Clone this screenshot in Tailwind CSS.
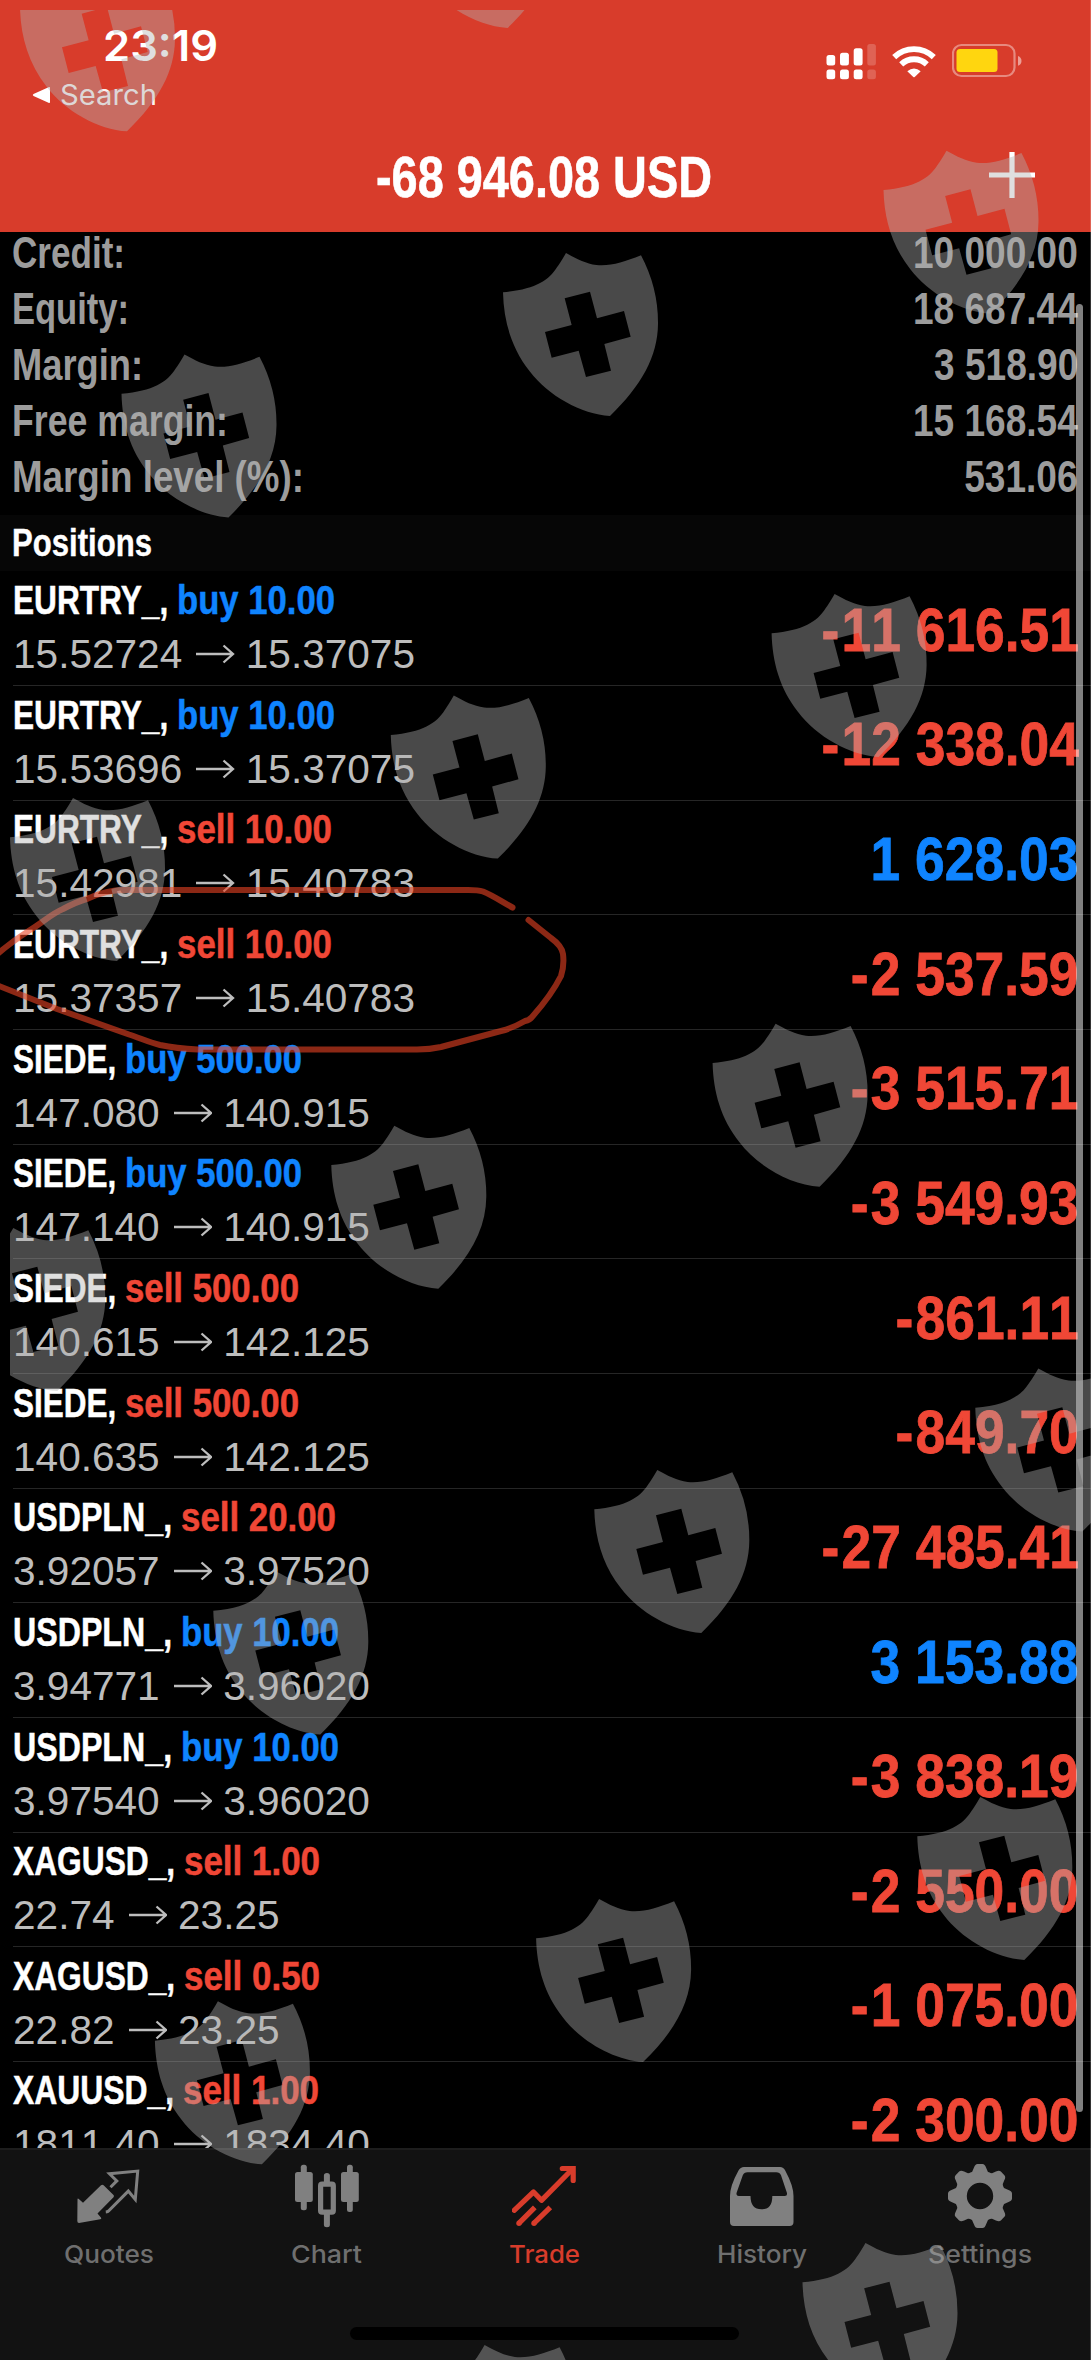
<!DOCTYPE html>
<html lang="en">
<head>
    <meta charset="UTF-8">
    <meta name="viewport" content="width=device-width, initial-scale=1.0">
    <title>Trade</title>
    <script src="https://cdn.jsdelivr.net/npm/@tailwindcss/browser@4"></script>
</head>
<body class="bg-black">
<div class="relative flex flex-col w-[1091px] h-[2360px] overflow-hidden bg-black font-['Liberation_Sans',Arial,sans-serif]">

    <!-- Header -->
    <header class="h-[232px] shrink-0 bg-[#d83c2b] text-white">
        <div class="flex justify-between h-[112px]">
            <div class="pt-[25px] pl-[32px] font-['Inter',sans-serif]">
                <div class="pl-[71px] h-[40px] leading-[40px] text-[43px] font-semibold"><span class="fit" data-font="600 43px Inter" data-w="115">23:19</span></div>
                <div class="flex items-center mt-[13px] h-[34px]">
                    <svg class="w-[19px] h-[18px]" viewBox="0 0 19 18"><path d="M18 2v14q0 1.500-1.500.8L1.500 10q-1.500-1 0-2L16.500 1.200Q18 .5 18 2z" fill="#fff"/></svg>
                    <span class="fit ml-[9px] leading-[34px] text-[28px] text-white/95" data-font="400 28px Inter" data-w="97">Search</span>
                </div>
            </div>
            <div class="flex items-start pt-[43px] pr-[68px]">
                <svg class="w-[50px] h-[38px]" viewBox="826 43 50 38" fill="#fff">
                    <rect x="826.500" y="55" width="8.700" height="10.500" rx="2.500"/><rect x="840" y="52.700" width="8.900" height="12.800" rx="2.500"/><rect x="853.700" y="48.300" width="8.900" height="17.200" rx="2.500"/><rect x="867.300" y="44" width="8.600" height="21.500" rx="2.500" fill-opacity=".2"/>
                    <rect x="826.500" y="69.600" width="8.700" height="9.700" rx="2.500"/><rect x="840" y="69.600" width="8.900" height="9.700" rx="2.500"/><rect x="853.700" y="69.600" width="8.900" height="9.700" rx="2.500"/><rect x="867.300" y="69.600" width="8.600" height="9.700" rx="2.500" fill-opacity=".2"/>
                </svg>
                <svg class="ml-[16px] w-[44px] h-[36px]" viewBox="0 0 44 36">
                    <g fill="none" stroke="#fff" stroke-width="5.800">
                        <path d="M2.200 14.200a28.500 28.500 0 0 1 39.600 0"/>
                        <path d="M9.200 21.400a18.500 18.500 0 0 1 25.600 0"/>
                    </g>
                    <path d="M15.300 28.200q6.700-5.400 13.400 0L22.700 34q-.7.600-1.400 0z" fill="#fff"/>
                </svg>
                <svg class="ml-[16px] w-[71px] h-[36px]" viewBox="952 44 71 36">
                    <rect x="953" y="46" width="61.500" height="31" rx="8.500" fill="none" stroke="#fff" stroke-opacity=".4" stroke-width="2.200"/>
                    <rect x="956.500" y="50" width="41" height="23" rx="3.500" fill="#ffd60f"/>
                    <path d="M1018 57q3.500 1.500 3.500 4.900t-3.500 4.900z" fill="#fff" fill-opacity=".5"/>
                </svg>
            </div>
        </div>
        <div class="grid grid-cols-[1fr_auto_1fr] pt-[35px]">
            <div></div>
            <div class="w-[339px] whitespace-nowrap"><span class="fit text-[57px] leading-[60px] font-bold [-webkit-text-stroke:0.6px_currentColor]" data-font="bold 57px Liberation Sans" data-w="336">-68 946.08 USD</span></div>
            <svg class="justify-self-end mt-[5px] mr-[56px] w-[46px] h-[46px]" viewBox="0 0 46 46"><path d="M23 0v46M0 23h46" stroke="#fff" stroke-width="5.200"/></svg>
        </div>
    </header>

    <!-- Account and positions -->
    <main class="flex-1 min-h-0 overflow-hidden">
        <div id="account" class="-mt-[7px] pb-[9.6px] text-[44px] font-bold leading-[56.1px] text-[#9c9c9c]"></div>
        <div class="h-[55.5px] pl-[12px] bg-[#060606] text-white text-[38.5px] leading-[55.5px] font-bold [-webkit-text-stroke:0.4px_currentColor]"><span class="fit" data-font="bold 38.5px Liberation Sans" data-w="140">Positions</span></div>
        <div id="positions"></div>
    </main>

    <!-- Tab bar -->
    <nav class="h-[212px] shrink-0 pr-[2px] bg-[#121212] border-t-2 border-[#1d1d1d] font-['Inter',sans-serif] text-[24.8px] font-medium text-[#6f6f6f]">
        <div class="grid grid-cols-5 pt-[13.500px]">
            <a class="flex flex-col items-center">
                <svg class="w-[64px] h-[64px]" viewBox="0 0 64 64">
                    <path d="M.5 35.500q0-1.500 1.300-.5L6 38.700 24 21.200q1.300-1 2.600 0L36.500 31q1 1 0 2.200L20.500 49.500l3.600 4.200q.7 1.300-.8 1.600L2 59Q.3 59 .3 57z" fill="#808080"/>
                    <path d="M33.500 23.200l6.300-6.300-7.300-7.100 28.200-2.700-2.400 28.400-7-8.400-19.500 19.600q-1 1.200-3 1.400" fill="none" stroke="#808080" stroke-width="3"/>
                </svg>
                <span class="mt-[11px] leading-[30px]"><span class="fit" data-font="500 24.8px Inter" data-w="90">Quotes</span></span>
            </a>
            <a class="flex flex-col items-center">
                <svg class="w-[64px] h-[64px]" viewBox="0 0 64 64" fill="#808080">
                    <rect x="0" y="8" width="17.800" height="30" rx="2.500"/><rect x="5.800" y=".7" width="6" height="45.500" rx="2.500"/>
                    <rect x="46" y="8" width="17.800" height="30" rx="2.500"/><rect x="52" y=".7" width="5.800" height="47.300" rx="2.500"/>
                    <path d="M28.900 18v-6.500q0-2.500 3-2.500t3 2.500V18zM28.900 50v10.800q0 2.500 3 2.500t3-2.500V50z"/>
                    <rect x="25.600" y="20.200" width="12.700" height="28" rx="1.500" fill="none" stroke="#808080" stroke-width="5.200"/>
                </svg>
                <span class="mt-[11px] leading-[30px]"><span class="fit" data-font="500 24.8px Inter" data-w="71">Chart</span></span>
            </a>
            <a class="flex flex-col items-center text-[#d83c2b]">
                <svg class="w-[64px] h-[64px]" viewBox="0 0 64 64" fill="none" stroke="#d83c2b" stroke-width="5.200">
                    <path d="M2.200 46.300L21.500 28l8 8.300L60 5.500" stroke-linecap="round" stroke-linejoin="round"/>
                    <path d="M50.300 4.500h10.900v12" stroke-linecap="round"/>
                    <path d="M6.800 59.400L22.800 43.300M21.800 59.400L38.300 43.300"/>
                    <g fill="#d83c2b" stroke="none"><circle cx="7" cy="59.200" r="2.700"/><circle cx="22" cy="59.200" r="2.700"/></g>
                </svg>
                <span class="mt-[11px] leading-[30px]"><span class="fit" data-font="500 24.8px Inter" data-w="71">Trade</span></span>
            </a>
            <a class="flex flex-col items-center">
                <svg class="w-[64px] h-[64px]" viewBox="0 0 64 64">
                    <path fill="#808080" fill-rule="evenodd" d="M14 3h36q3.500 0 5.200 3.600Q63.500 22 63.500 32v26q0 4-4 4H4q-4 0-4-4V32Q0 22 8.500 6.600 10.500 3 14 3zM17.500 8.300q-3.500 0-4.700 3L6.700 28.500q-1 3.500 2 3.500h11.800q0 13.300 11 13.300T42.300 32h12.500q3 0 2-3.500L51 11.300q-1.200-3-4.700-3z"/>
                </svg>
                <span class="mt-[11px] leading-[30px]"><span class="fit" data-font="500 24.8px Inter" data-w="90">History</span></span>
            </a>
            <a class="flex flex-col items-center">
                <svg class="w-[64px] h-[64px]" viewBox="0 0 64 64" fill="#808080">
                    <defs><path id="tooth" d="M21.500 11Q24.500 8.500 26 3.500 27.200 0 29.500 0h5q2.300 0 3.500 3.500 1.500 5 4.500 7.500z"/></defs>
                    <circle cx="32" cy="32" r="19.200" fill="none" stroke="#808080" stroke-width="12"/>
                    <use href="#tooth"/><use href="#tooth" transform="rotate(45 32 32)"/><use href="#tooth" transform="rotate(90 32 32)"/><use href="#tooth" transform="rotate(135 32 32)"/>
                    <use href="#tooth" transform="rotate(180 32 32)"/><use href="#tooth" transform="rotate(225 32 32)"/><use href="#tooth" transform="rotate(270 32 32)"/><use href="#tooth" transform="rotate(315 32 32)"/>
                </svg>
                <span class="mt-[11px] leading-[30px]"><span class="fit" data-font="500 24.8px Inter" data-w="104">Settings</span></span>
            </a>
        </div>
        <div class="mx-auto mt-[58px] w-[389px] h-[13px] rounded-full bg-black"></div>
    </nav>

    <!-- Scroll indicator and screen edge -->
    <div class="absolute left-[1075.6px] top-[304px] w-[7.6px] h-[1808px] rounded-full bg-white/50"></div>
    <div class="absolute right-0 top-0 w-px h-full bg-white/20"></div>

    <!-- Pen mark and watermark -->
    <svg class="absolute inset-0 w-[1091px] h-[2360px]" viewBox="0 0 1091 2360">
        <defs>
            <path id="shield" transform="scale(.33333)" d="M0 118C95 110 137 83 162 43Q173 28 189 0C220 17 248 32 280 36 322 40 362 28 414 7Q466 105 465 213C464 310 416 397 321 489 235 484 135 428 80 355 25 285 2 205 0 118ZM185 136L206 216 126 237 146 314 227 293 249 372 324 353 304 273 383 251 363 174 282 196 261 116Z"/>
            <clipPath id="area"><rect x="10" y="10" width="1081" height="2350"/></clipPath>
        </defs>
        <g fill="none" stroke="#e94223" stroke-opacity=".6" stroke-width="6" stroke-linecap="round" stroke-linejoin="round">
            <path d="M-6 957C4 948 16 939 30 930 42 923 51 914 63 909Q76 902 88 898.500C100 893 112 890 124 890H463Q477 889.500 483 891.500C494 896 502 902 512.500 907.500"/>
            <path d="M528.500 920L551 938Q562 946 563 954C564 962 563 970 561 976 552 994 540 1008 532 1017Q530 1020 525 1021 513 1028 501 1031L441 1047Q430 1049.500 417 1049.500H198Q176 1048.500 160 1045C148 1042 140 1038 129 1034.500L57 1009Q24 996 -6 984"/>
        </g>
        <g id="shields" clip-path="url(#area)" fill="#b2b2b2" fill-opacity=".41" fill-rule="evenodd"></g>
    </svg>
</div>
</body>
<script>
const account = [
    ['Credit:', '10 000.00', 113],
    ['Equity:', '18 687.44', 117],
    ['Margin:', '3 518.90', 131],
    ['Free margin:', '15 168.54', 216],
    ['Margin level (%):', '531.06', 292],
];

// symbol, side, volume, open, current, profit
const positions = [
    ['EURTRY_', 'buy', '10.00', '15.52724', '15.37075', '-11 616.51'],
    ['EURTRY_', 'buy', '10.00', '15.53696', '15.37075', '-12 338.04'],
    ['EURTRY_', 'sell', '10.00', '15.42981', '15.40783', '1 628.03'],
    ['EURTRY_', 'sell', '10.00', '15.37357', '15.40783', '-2 537.59'],
    ['SIEDE', 'buy', '500.00', '147.080', '140.915', '-3 515.71'],
    ['SIEDE', 'buy', '500.00', '147.140', '140.915', '-3 549.93'],
    ['SIEDE', 'sell', '500.00', '140.615', '142.125', '-861.11'],
    ['SIEDE', 'sell', '500.00', '140.635', '142.125', '-849.70'],
    ['USDPLN_', 'sell', '20.00', '3.92057', '3.97520', '-27 485.41'],
    ['USDPLN_', 'buy', '10.00', '3.94771', '3.96020', '3 153.88'],
    ['USDPLN_', 'buy', '10.00', '3.97540', '3.96020', '-3 838.19'],
    ['XAGUSD_', 'sell', '1.00', '22.74', '23.25', '-2 550.00'],
    ['XAGUSD_', 'sell', '0.50', '22.82', '23.25', '-1 075.00'],
    ['XAUUSD_', 'sell', '1.00', '1811.40', '1834.40', '-2 300.00'],
];

const symbolWidth = { 'EURTRY_': 164, 'SIEDE': 112, 'USDPLN_': 168, 'XAGUSD_': 171, 'XAUUSD_': 170 };
const sideWidth = { 'buy 10.00': 158, 'sell 10.00': 155, 'buy 500.00': 177, 'sell 500.00': 174, 'sell 20.00': 155, 'sell 1.00': 136, 'sell 0.50': 136 };

document.getElementById('account').innerHTML = account.map(([label, value, w]) => `
    <div class="flex justify-between pl-[12px] pr-[13px]">
        <span class="fit whitespace-pre" data-font="bold 44px Liberation Sans" data-w="${w}">${label}</span>
        <span class="inline-block origin-right scale-x-[.842] [font-kerning:none]">${value}</span>
    </div>`).join('');

document.getElementById('positions').innerHTML = positions.map(([symbol, side, volume, open, price, profit]) => `
    <div class="relative flex justify-between h-[114.65px] pl-[12px] pr-[12.5px]">
        <div class="pt-[2.6px] text-[40px] leading-[54px]">
            <div class="flex pl-px font-bold whitespace-pre [-webkit-text-stroke:0.5px_currentColor]">
                <span class="fit text-white" data-font="bold 40px Liberation Sans" data-w="${symbolWidth[symbol]}">${symbol}, </span>
                <span class="fit ${side === 'buy' ? 'text-[#0f84ff]' : 'text-[#f04736]'}" data-font="bold 40px Liberation Sans" data-w="${sideWidth[side + ' ' + volume]}">${side} ${volume}</span>
            </div>
            <div class="flex items-center pl-px text-[40.6px] text-[#bdbdbd] [font-kerning:none]">
                <span>${open}</span>
                <svg class="ml-[14px] mr-[11px] w-[38.500px] h-[20px]" viewBox="0 0 38.5 20"><path d="M0 10h37M27.500 1.500L37 10l-9.500 8.500" fill="none" stroke="#bdbdbd" stroke-width="2.300"/></svg>
                <span>${price}</span>
            </div>
        </div>
        <div class="pt-[3.2px] text-[62px] leading-[111px] font-bold origin-right scale-x-[.861] [font-kerning:none] [-webkit-text-stroke:0.8px_currentColor] ${profit[0] === '-' ? 'text-[#f04736]' : 'text-[#0f84ff]'}">${profit.replace('-', '<span class="mr-[2.500px]">-</span>')}</div>
        <div class="absolute left-[13px] right-0 -bottom-px h-px bg-[#262626]"></div>
    </div>`).join('');

const shields = [
    [19.7, -31.7], [400.3, -135],
    [883.2, 150.7], [502.7, 253], [121.2, 354.4],
    [771.3, 594], [390.5, 695.6], [9.7, 798],
    [712.3, 1023.7], [331, 1125.7], [-50, 1228],
    [975, 1368.5], [594, 1470], [213, 1571.5],
    [917, 1797], [535.8, 1899], [154.6, 2001.3],
    [802.2, 2243], [421.3, 2345],
];
document.getElementById('shields').innerHTML = shields.map(([x, y]) => `<g transform="translate(${x + 0.3} ${y})"><use href="#shield"/></g>`).join('');

// squeeze each label to its condensed width
const ctx = document.createElement('canvas').getContext('2d');
document.querySelectorAll('.fit').forEach(el => {
    ctx.font = el.dataset.font;
    const natural = ctx.measureText(el.textContent).width;
    const w = Number(el.dataset.w);
    el.style.display = 'inline-block';
    el.style.transformOrigin = 'left';
    el.style.transform = `scaleX(${w / natural})`;
    el.style.marginRight = (w - natural) + 'px';
});
</script>
</html>
